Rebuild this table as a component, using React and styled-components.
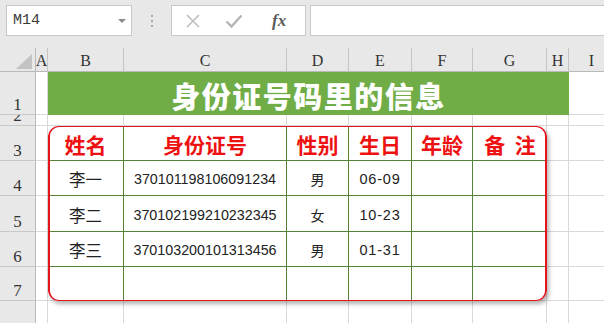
import React from 'react';
import styled, { createGlobalStyle } from 'styled-components';

const GlobalStyle = createGlobalStyle`
  html, body { margin: 0; padding: 0; background: #ffffff; overflow: hidden; }
  * { box-sizing: border-box; }
`;

const Window = styled.div`
  width: 604px;
  height: 323px;
  overflow: hidden;
  background: #ffffff;
  display: flex;
  flex-direction: column;
`;

const FormulaBar = styled.div`
  height: 48px;
  flex: none;
  background: #e8e8e8;
  display: flex;
  align-items: flex-start;
  padding: 5px 0 0 6px;
`;

const NameBox = styled.div`
  width: 126px;
  height: 31px;
  background: #ffffff;
  border: 1px solid #c9c9c9;
  display: flex;
  align-items: center;
  justify-content: space-between;
  padding: 0 5px 0 6px;
  font-family: "Liberation Mono", "DejaVu Sans Mono", monospace;
  font-size: 15px;
  color: #3a3a3a;
`;

const Caret = styled.span`
  width: 0;
  height: 0;
  border-left: 4px solid transparent;
  border-right: 4px solid transparent;
  border-top: 4px solid #8a8a8a;
`;

const Grip = styled.div`
  width: 39px;
  height: 31px;
  display: flex;
  flex-direction: column;
  align-items: center;
  justify-content: center;
  gap: 3px;
`;

const GripDot = styled.span`
  width: 2px;
  height: 2px;
  background: #a9a9a9;
`;

const FuncBox = styled.div`
  width: 135px;
  height: 31px;
  background: #ffffff;
  border: 1px solid #c9c9c9;
  display: flex;
  align-items: center;
  padding-left: 13px;
  gap: 24px;
`;

const FxLabel = styled.span`
  font-family: "Liberation Serif", "DejaVu Serif", serif;
  font-style: italic;
  font-weight: bold;
  font-size: 17px;
  color: #5a5a5a;
  margin-left: 5px;
`;

const FormulaInput = styled.div`
  flex: 1;
  height: 31px;
  margin-left: 4px;
  margin-right: -2px;
  background: #ffffff;
  border: 1px solid #c9c9c9;
`;

const Sheet = styled.div`
  display: grid;
  grid-template-columns: 36px 12px 76px 163px 62px 63px 61px 74px 22px 46px;
  grid-template-rows: 24px 43px 11px 35px 35px 36px 35px 34px 40px;
  background: #ffffff;
`;

const Placed = styled.div`
  grid-row: ${(p) => p.$r} / span ${(p) => p.$rs || 1};
  grid-column: ${(p) => p.$c} / span ${(p) => p.$cs || 1};
`;

const Corner = styled(Placed)`
  background: #e8e8e8;
  border-right: 1px solid #b9b9b9;
  border-bottom: 1px solid #b9b9b9;
  display: flex;
  align-items: flex-end;
  justify-content: flex-end;
  padding: 0 3px 2px 0;
`;

const ColHeader = styled(Placed)`
  background: #e8e8e8;
  border-right: 1px solid #c4c4c4;
  border-bottom: 1px solid #b9b9b9;
  display: flex;
  align-items: center;
  justify-content: center;
  padding-top: 3px;
  font-family: "Liberation Serif", "DejaVu Serif", serif;
  font-size: 16px;
  color: #333333;
  overflow: hidden;
`;

const RowHeader = styled(Placed)`
  background: #e8e8e8;
  border-right: 1px solid #b9b9b9;
  border-bottom: 1px solid #c8c8c8;
  display: flex;
  align-items: flex-end;
  justify-content: center;
  padding-bottom: 1px;
  font-family: "Liberation Serif", "DejaVu Serif", serif;
  font-size: 17px;
  line-height: 17px;
  color: #333333;
  overflow: hidden;
`;

const GridCell = styled(Placed)`
  border-right: 1px solid #d9d9d9;
  border-bottom: 1px solid #d9d9d9;
`;

const Title = styled(Placed)`
  background: #70ad47;
  display: flex;
  align-items: center;
  justify-content: center;
  padding-top: 2px;
  font-family: "Noto Sans CJK SC", "Noto Sans", sans-serif;
  font-weight: 900;
  font-size: 29px;
  letter-spacing: 1.5px;
  color: #ffffff;
`;

const Table = styled(Placed)`
  position: relative;
  background: #ffffff;
  border-radius: 11px;
  overflow: hidden;
  box-shadow: 2px 3px 4px rgba(0, 0, 0, 0.3);
  display: grid;
  grid-template-columns: 76px 163px 62px 63px 61px 74px;
  grid-template-rows: 35px 35px 36px 35px 34px;
  &::after {
    content: "";
    position: absolute;
    inset: -1px 0 -1px 0;
    border: 2px solid #e3141c;
    border-radius: 11px;
    pointer-events: none;
  }
`;

const TCell = styled.div`
  border-right: ${(p) => (p.$lastCol ? 'none' : '1px solid #55833a')};
  border-bottom: ${(p) => (p.$lastRow ? 'none' : '1px solid #55833a')};
  display: flex;
  align-items: center;
  justify-content: center;
  padding-top: 2px;
  white-space: pre;
  color: #222222;
`;

const HeadCell = styled(TCell)`
  font-family: "Noto Sans CJK SC", sans-serif;
  font-weight: 700;
  font-size: 21px;
  color: #ee1111;
`;

const BodyCell = styled(TCell)`
  font-family: ${(p) => (p.$num ? '"Liberation Sans", Arial, sans-serif' : '"Noto Sans CJK SC", sans-serif')};
  font-size: ${(p) => p.$size}px;
  letter-spacing: ${(p) => p.$track || 0}px;
`;

const colLetters = ['A', 'B', 'C', 'D', 'E', 'F', 'G', 'H', 'I'];
const rowNums = [1, 2, 3, 4, 5, 6, 7, 8];

const headers = ['姓名', '身份证号', '性别', '生日', '年龄', '备  注'];
const rows = [
  ['李一', '370101198106091234', '男', '06-09', '', ''],
  ['李二', '370102199210232345', '女', '10-23', '', ''],
  ['李三', '370103200101313456', '男', '01-31', '', ''],
  ['', '', '', '', '', ''],
];
const colKinds = [
  { num: false, size: 16.5, track: 0 },
  { num: true, size: 14.3, track: 0 },
  { num: false, size: 14, track: 0 },
  { num: true, size: 14.5, track: 0.8 },
  { num: false, size: 14, track: 0 },
  { num: false, size: 14, track: 0 },
];

function XIcon() {
  return (
    <svg width="16" height="16" viewBox="0 0 16 16">
      <path d="M2 2 L14 14 M14 2 L2 14" stroke="#bdbdbd" strokeWidth="1.6" fill="none" />
    </svg>
  );
}

function CheckIcon() {
  return (
    <svg width="18" height="16" viewBox="0 0 18 16">
      <path d="M1.5 8.5 L6.5 13.5 L16.5 2.5" stroke="#b5b5b5" strokeWidth="2.4" fill="none" />
    </svg>
  );
}

function CornerTriangle() {
  return (
    <svg width="16" height="15" viewBox="0 0 16 15">
      <polygon points="16,0 16,15 0,15" fill="#c3c3c3" />
    </svg>
  );
}

export default function App() {
  return (
    <Window>
      <GlobalStyle />
      <FormulaBar>
        <NameBox>
          <span>M14</span>
          <Caret />
        </NameBox>
        <Grip>
          <GripDot />
          <GripDot />
          <GripDot />
        </Grip>
        <FuncBox>
          <XIcon />
          <CheckIcon />
          <FxLabel>fx</FxLabel>
        </FuncBox>
        <FormulaInput />
      </FormulaBar>
      <Sheet>
        <Corner $r={1} $c={1}>
          <CornerTriangle />
        </Corner>
        {colLetters.map((l, i) => (
          <ColHeader key={l} $r={1} $c={i + 2}>
            {l}
          </ColHeader>
        ))}
        {rowNums.map((n) => (
          <RowHeader key={n} $r={n + 1} $c={1}>
            {n}
          </RowHeader>
        ))}
        {rowNums.map((n) =>
          colLetters.map((l, i) => <GridCell key={`${l}${n}`} $r={n + 1} $c={i + 2} />)
        )}
        <Title $r={2} $c={3} $cs={7}>
          身份证号码里的信息
        </Title>
        <Table $r={4} $c={3} $cs={6} $rs={5}>
          {headers.map((h, i) => (
            <HeadCell key={h} $lastCol={i === headers.length - 1}>
              {h}
            </HeadCell>
          ))}
          {rows.map((row, ri) =>
            row.map((v, ci) => (
              <BodyCell
                key={`${ri}-${ci}`}
                $num={colKinds[ci].num}
                $size={colKinds[ci].size}
                $track={colKinds[ci].track}
                $lastCol={ci === row.length - 1}
                $lastRow={ri === rows.length - 1}
              >
                {v}
              </BodyCell>
            ))
          )}
        </Table>
      </Sheet>
    </Window>
  );
}
